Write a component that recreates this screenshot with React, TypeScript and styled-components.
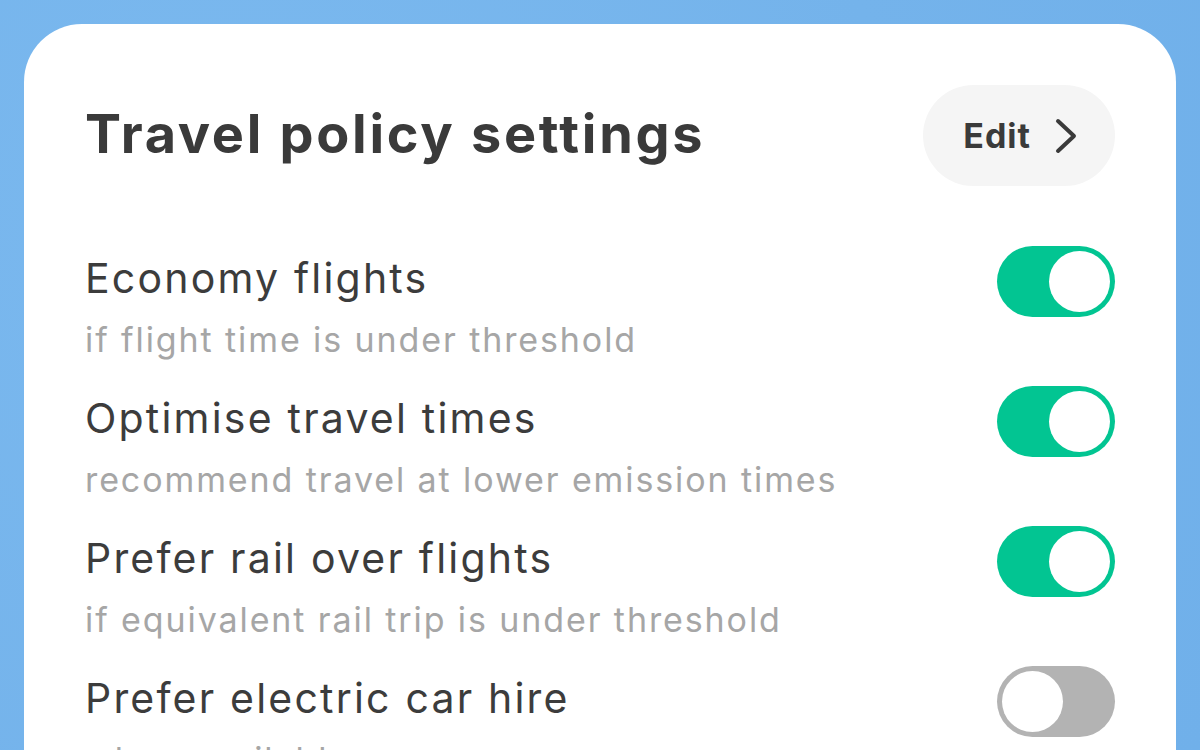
import React from "react";
import styled, { createGlobalStyle } from "styled-components";

const Global = createGlobalStyle`
  html, body { margin: 0; padding: 0; }
  body {
    width: 1200px;
    height: 750px;
    overflow: hidden;
    background: #77b6ed;
    font-family: Inter, "Noto Sans", sans-serif;
  }
`;

const Page = styled.div`
  width: 1200px;
  height: 750px;
  box-sizing: border-box;
  padding: 24px 24px 0 24px;
  background: radial-gradient(circle at 20% 30%, #7bb9ef 0%, #74b3eb 60%, #70b0ea 100%);
  overflow: hidden;
`;

const Card = styled.section`
  background: #ffffff;
  border-radius: 58px 58px 0 0;
  padding: 61px 61px 40px 61px;
  height: 800px;
  box-sizing: border-box;
`;

const Header = styled.header`
  display: flex;
  align-items: center;
  justify-content: space-between;
  height: 101px;
`;

const Heading = styled.h1`
  margin: 0;
  font-family: Inter, sans-serif;
  font-weight: 700;
  font-size: 54px;
  line-height: 1;
  color: #3a3a3a;
  letter-spacing: 2.7px;
  position: relative;
  top: -2px;
`;

const EditButton = styled.button`
  display: flex;
  align-items: center;
  gap: 24px;
  height: 101px;
  padding: 0 38px 0 40px;
  border: none;
  border-radius: 51px;
  background: #f5f5f5;
  font-family: Inter, sans-serif;
  font-weight: 700;
  font-size: 34px;
  letter-spacing: 1px;
  color: #3a3a3a;
  cursor: pointer;
`;

const List = styled.div`
  display: flex;
  flex-direction: column;
  margin-top: 60px;
`;

const Row = styled.div`
  display: flex;
  justify-content: space-between;
  align-items: flex-start;
  height: 140px;
`;

const TextBlock = styled.div`
  display: flex;
  flex-direction: column;
`;

const Title = styled.div`
  margin-top: 8px;
  font-size: 41px;
  line-height: 48px;
  letter-spacing: 2.2px;
  color: #3c3c3c;
  font-weight: 400;
`;

const Subtitle = styled.div`
  margin-top: 18px;
  font-size: 34px;
  line-height: 40px;
  letter-spacing: 1.9px;
  color: #a6a6a6;
  font-weight: 400;
`;

const Track = styled.div<{ $on: boolean }>`
  flex: none;
  width: 118px;
  height: 71px;
  box-sizing: border-box;
  padding: 5px;
  border-radius: 36px;
  background: ${(p) => (p.$on ? "#02c592" : "#b3b3b3")};
  display: flex;
  justify-content: ${(p) => (p.$on ? "flex-end" : "flex-start")};
  align-items: center;
`;

const Knob = styled.div`
  width: 61px;
  height: 61px;
  border-radius: 50%;
  background: #ffffff;
`;

const Chevron = () => (
  <svg width="22" height="36" viewBox="0 0 22 36" fill="none">
    <path d="M3 3 L19 18 L3 33" stroke="#3a3a3a" strokeWidth="4" strokeLinecap="round" strokeLinejoin="round" />
  </svg>
);

const items = [
  { title: "Economy flights", sub: "if flight time is under threshold", on: true },
  { title: "Optimise travel times", sub: "recommend travel at lower emission times", on: true },
  { title: "Prefer rail over flights", sub: "if equivalent rail trip is under threshold", on: true },
  { title: "Prefer electric car hire", sub: "when available", on: false },
];

export default function App() {
  return (
    <>
      <Global />
      <Page>
        <Card>
          <Header>
            <Heading>Travel policy settings</Heading>
            <EditButton>
              Edit
              <Chevron />
            </EditButton>
          </Header>
          <List>
            {items.map((it) => (
              <Row key={it.title}>
                <TextBlock>
                  <Title>{it.title}</Title>
                  <Subtitle>{it.sub}</Subtitle>
                </TextBlock>
                <Track $on={it.on}>
                  <Knob />
                </Track>
              </Row>
            ))}
          </List>
        </Card>
      </Page>
    </>
  );
}
